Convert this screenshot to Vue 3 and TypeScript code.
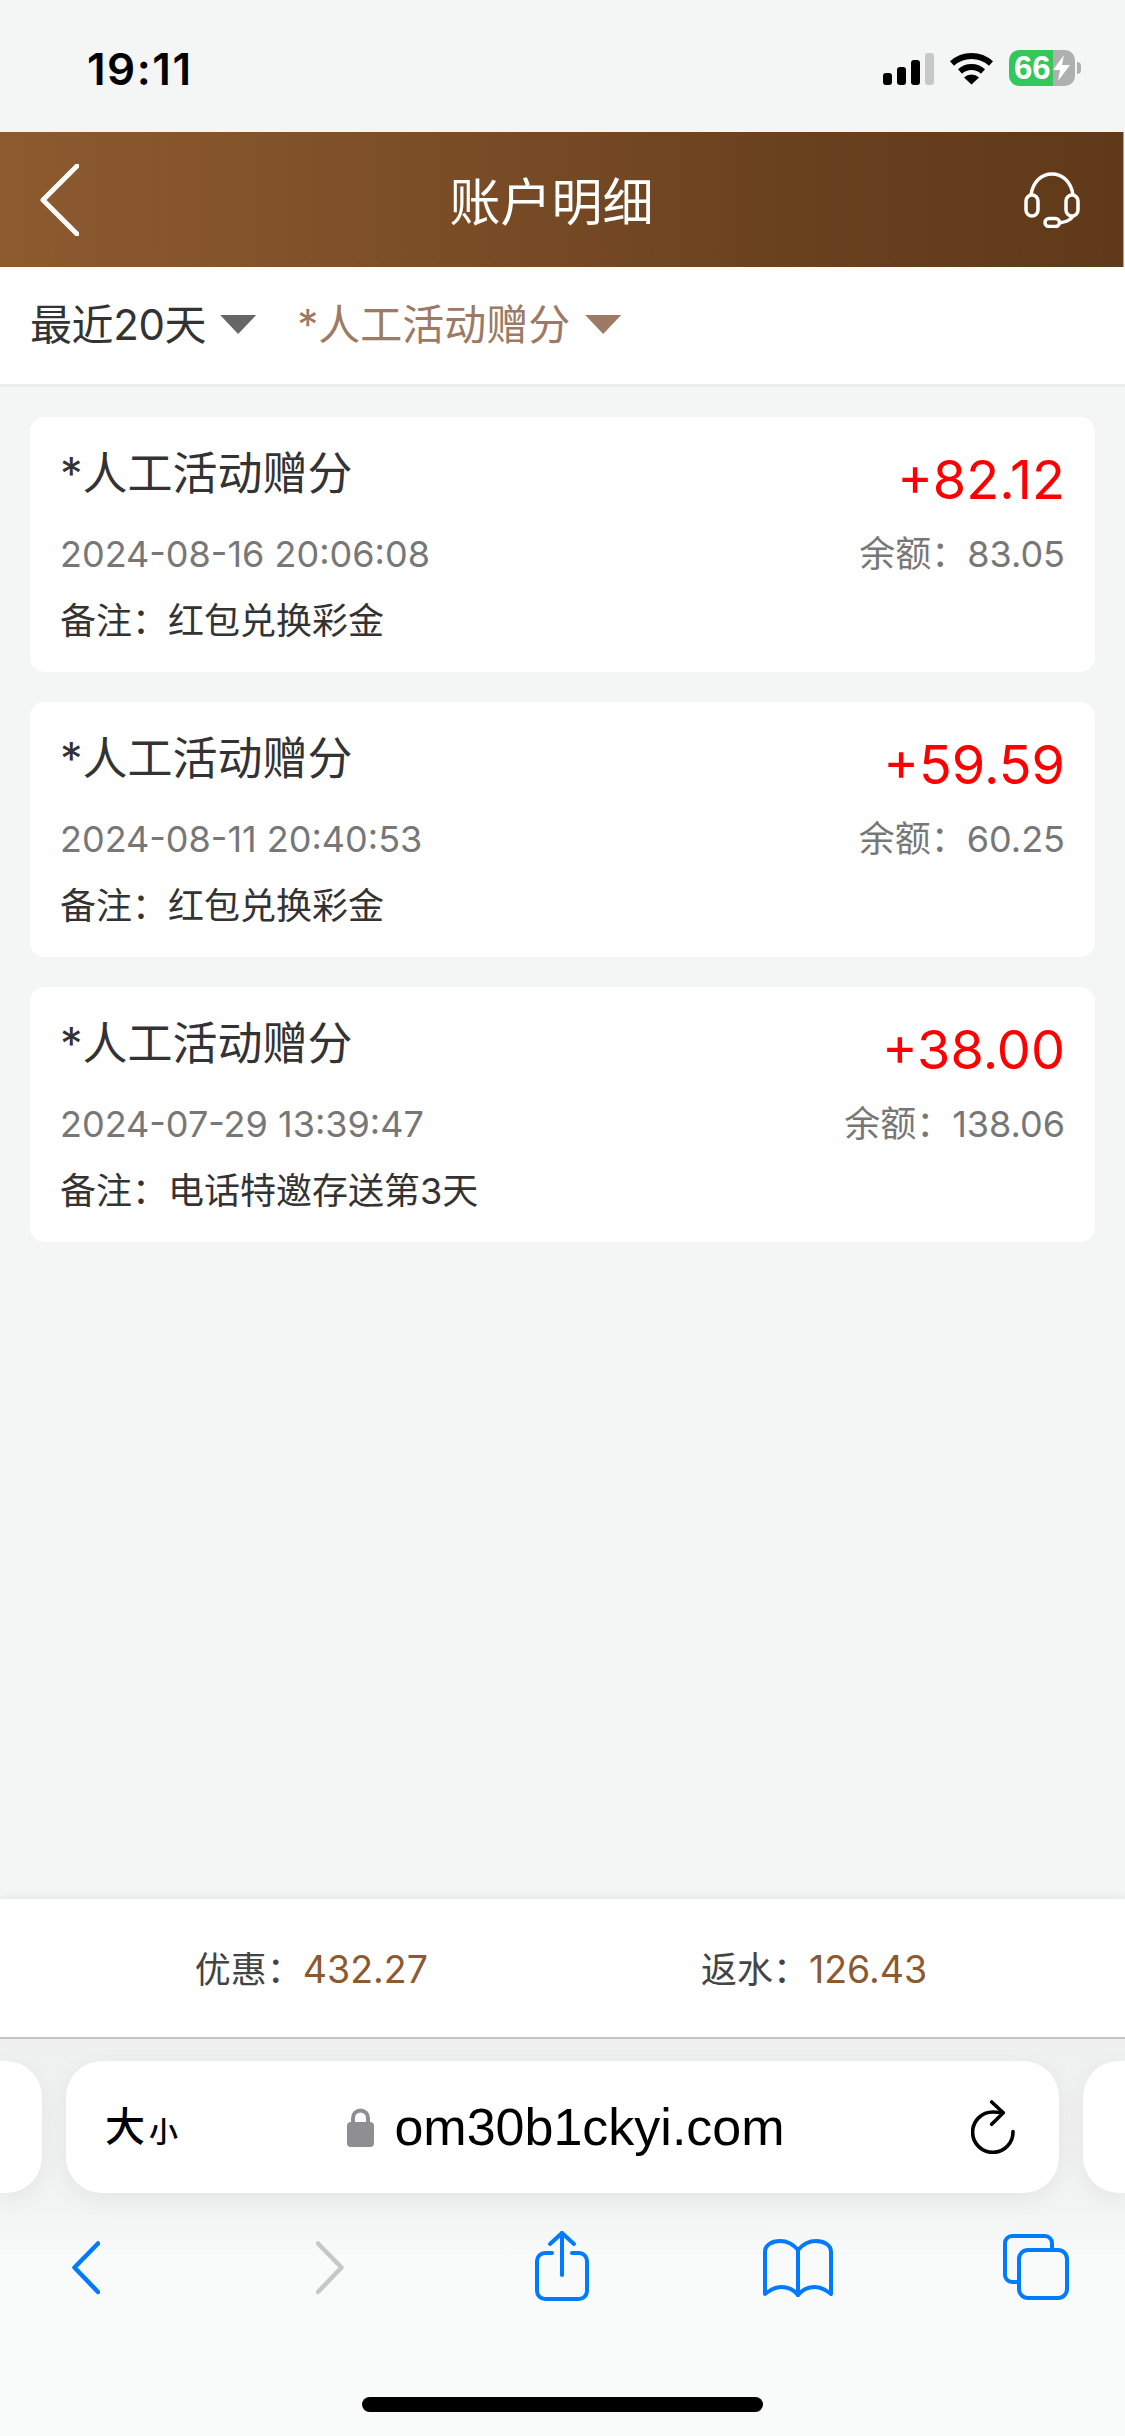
<script setup lang="ts">
interface Record {
  title: string
  amount: string
  time: string
  balance: string
  remark: string
}

const records: Record[] = [
  { title: '*人工活动赠分', amount: '+82.12', time: '2024-08-16 20:06:08', balance: '83.05', remark: '红包兑换彩金' },
  { title: '*人工活动赠分', amount: '+59.59', time: '2024-08-11 20:40:53', balance: '60.25', remark: '红包兑换彩金' },
  { title: '*人工活动赠分', amount: '+38.00', time: '2024-07-29 13:39:47', balance: '138.06', remark: '电话特邀存送第3天' },
]
</script>

<template>
  <div class="page">
    <div class="status-bar">
      <span class="clock">19:11</span>
      <div class="status-icons">
        <div class="signal">
          <i class="b1"></i><i class="b2"></i><i class="b3"></i><i class="b4"></i>
        </div>
        <svg class="wifi" width="45" height="34" viewBox="0 0 45 34">
          <path d="M3 12.5 A29 29 0 0 1 42 12.5" fill="none" stroke="#000" stroke-width="6" />
          <path d="M11 20.5 A17 17 0 0 1 34 20.5" fill="none" stroke="#000" stroke-width="6" />
          <path d="M22.5 33.5 L15 26.5 A11 11 0 0 1 30 26.5 Z" fill="#000" />
        </svg>
        <div class="battery">
          <span>66</span>
          <svg width="17" height="26" viewBox="0 0 17 26">
            <path d="M11 0 L0 15 H7 L5 26 L17 10 H9 Z" fill="#fff" />
          </svg>
        </div>
      </div>
    </div>

    <div class="header">
      <svg width="39" height="72" viewBox="0 0 39 72">
        <path d="M37 2 L3 36 L37 70" fill="none" stroke="#fff" stroke-width="5" stroke-linecap="round" stroke-linejoin="round" />
      </svg>
      <h1>账户明细</h1>
      <svg width="56" height="56" viewBox="0 0 56 56" fill="none" stroke="#fff" stroke-width="3.5">
        <path d="M7 23 C9 9 18 2 28 2 C38 2 47 9 49 23" />
        <rect x="2" y="23" width="12" height="21" rx="6" />
        <rect x="42" y="23" width="12" height="21" rx="6" />
        <path d="M49 44 C46 49 41 50 35 51" />
        <rect x="21" y="46.5" width="14.5" height="8" rx="4" />
      </svg>
    </div>

    <div class="filter-bar">
      <div class="filter first">
        <span>最近20天</span>
        <i class="arrow"></i>
      </div>
      <div class="filter active">
        <span>*人工活动赠分</span>
        <i class="arrow"></i>
      </div>
    </div>

    <div class="list">
      <div v-for="(item, index) in records" :key="index" class="card">
        <div class="row top">
          <span class="title">{{ item.title }}</span>
          <span class="amount">{{ item.amount }}</span>
        </div>
        <div class="row middle">
          <span>{{ item.time }}</span>
          <span>余额：{{ item.balance }}</span>
        </div>
        <div class="remark">备注：{{ item.remark }}</div>
      </div>
    </div>

    <div class="summary">
      <span>优惠：<em>432.27</em></span>
      <span>返水：<em>126.43</em></span>
    </div>

    <div class="toolbar">
      <div class="url-row">
        <div class="side-tab left"></div>
        <div class="url-bar">
          <div class="text-size"><span class="big">大</span><span class="small">小</span></div>
          <div class="domain">
            <svg width="27" height="39" viewBox="0 0 27 39">
              <path d="M6 17 V10 a7.5 7.5 0 0 1 15 0 V17" fill="none" stroke="#8e8e93" stroke-width="4" />
              <rect x="0" y="14" width="27" height="25" rx="4" fill="#8e8e93" />
            </svg>
            <span>om30b1ckyi.com</span>
          </div>
          <svg class="reload" width="44" height="54" viewBox="0 0 44 54" fill="none" stroke="#000" stroke-width="3.6" stroke-linecap="round" stroke-linejoin="round">
            <path d="M42 31.5 A20.2 20.2 0 1 1 22 12 L30 12.5" />
            <path d="M20.7 2 L32.3 12.7 L20.7 24.3" />
          </svg>
        </div>
        <div class="side-tab right"></div>
      </div>

      <div class="nav-row">
        <svg class="back" width="28" height="54" viewBox="0 0 28 54" fill="none" stroke="#007aff" stroke-width="4.5" stroke-linecap="round" stroke-linejoin="round">
          <path d="M26 2.5 L2.5 26.5 L26 51" />
        </svg>
        <svg class="forward" width="28" height="54" viewBox="0 0 28 54" fill="none" stroke="#c7c7c9" stroke-width="4.5" stroke-linecap="round" stroke-linejoin="round">
          <path d="M2 2.5 L25.5 26.5 L2 51" />
        </svg>
        <svg class="share" width="56" height="72" viewBox="0 0 56 72" fill="none" stroke="#007aff" stroke-width="4" stroke-linecap="round" stroke-linejoin="round">
          <path d="M18 23 H11 a8 8 0 0 0 -8 8 V61 a8 8 0 0 0 8 8 H45 a8 8 0 0 0 8 -8 V31 a8 8 0 0 0 -8 -8 H38" />
          <path d="M28 3 V45" />
          <path d="M16 14 L28 3 L40 14" />
        </svg>
        <svg class="book" width="70" height="58" viewBox="0 0 70 58" fill="none" stroke="#007aff" stroke-width="4" stroke-linecap="round" stroke-linejoin="round">
          <path d="M35 11 C30 5 23 2 17 2 C9 2 2 6 2 13 V55 C8 50 13 48 18 48 C25 48 31 51 35 56 C39 51 45 48 52 48 C57 48 62 50 68 55 V13 C68 6 61 2 53 2 C47 2 40 5 35 11 Z" />
          <path d="M35 11 V56" />
        </svg>
        <svg class="tabs" width="67" height="66" viewBox="0 0 67 66" fill="none" stroke="#007aff" stroke-width="4">
          <path d="M50 15 V9 a7 7 0 0 0 -7 -7 H10 a7 7 0 0 0 -7 7 V41 a7 7 0 0 0 7 7 H17" />
          <rect x="17" y="16" width="48" height="48" rx="9" />
        </svg>
      </div>

      <div class="home-indicator"></div>
    </div>
  </div>
</template>

<style scoped>
.page {
  width: 1125px;
  height: 2436px;
  display: flex;
  flex-direction: column;
  overflow: hidden;
  background-color: #f4f6f5;
  font-family: "Inter", "Noto Sans CJK SC", sans-serif;
}

.status-bar {
  height: 132px;
  padding: 0 50px 0 87px;
  display: flex;
  align-items: center;
  justify-content: space-between;
  box-sizing: border-box;
}

.clock {
  font-size: 44px;
  font-weight: 600;
  letter-spacing: 1.5px;
  color: #000;
  margin-top: 5px;
}

.status-icons {
  display: flex;
  align-items: center;
  margin-top: 4px;
}

.signal {
  display: flex;
  align-items: flex-end;
  gap: 5px;
  height: 33px;
}

.signal i {
  width: 9px;
  border-radius: 3px;
  background-color: #000;
}

.signal .b1 { height: 12px; }
.signal .b2 { height: 18px; }
.signal .b3 { height: 25px; }
.signal .b4 { height: 32px; background-color: #c7c9c9; }

.wifi {
  margin: 0 15px;
}

.battery {
  position: relative;
  width: 66px;
  height: 36px;
  border-radius: 10px;
  padding-left: 5px;
  box-sizing: border-box;
  display: flex;
  align-items: center;
  background: linear-gradient(90deg, #34c759 44px, #aeafb1 44px);
  color: #fff;
  font-family: "Liberation Sans", sans-serif;
  font-size: 33px;
  font-weight: 700;
}

.battery svg {
  margin-left: 2px;
}

.battery::after {
  content: "";
  position: absolute;
  left: 68px;
  top: 12px;
  width: 4px;
  height: 12px;
  border-radius: 0 6px 6px 0;
  background-color: #aeafb1;
}

.header {
  height: 135px;
  margin-right: 1px;
  padding: 0 43px 0 40px;
  display: flex;
  align-items: center;
  justify-content: space-between;
  box-sizing: border-box;
  border-right: 1px solid #b5a691;
  background: linear-gradient(90deg, #8d5a2f 0%, #7d4f28 35%, #6a411f 70%, #5f3919 100%);
}

.header h1 {
  margin: 0 0 2px;
  font-size: 51px;
  font-weight: 400;
  color: #fff;
}

.filter-bar {
  height: 120px;
  padding: 0 0 2px 30px;
  display: flex;
  align-items: center;
  gap: 41px;
  background-color: #fff;
  border-bottom: 3px solid #ebecec;
  box-sizing: border-box;
}

.filter {
  display: flex;
  align-items: center;
  gap: 14px;
  font-size: 42px;
  color: #333;
}

.filter span {
  margin-top: -6px;
}

.filter.first span {
  letter-spacing: -0.4px;
}

.filter.active {
  gap: 15px;
}

.filter .arrow {
  width: 36px;
  height: 19px;
  background-color: #666;
  clip-path: polygon(0 0, 100% 0, 50% 100%);
}

.filter.active {
  color: #9c7a63;
}

.filter.active .arrow {
  background-color: #9c7a63;
}

.list {
  flex: 1;
  padding: 30px 30px 0;
  display: flex;
  flex-direction: column;
  gap: 30px;
}

.card {
  height: 255px;
  padding: 30px 30px 0;
  box-sizing: border-box;
  border-radius: 15px;
  background-color: #fff;
}

.row {
  display: flex;
  justify-content: space-between;
}

.top {
  height: 62px;
}

.title {
  font-size: 45px;
  line-height: 53px;
  color: #333;
}

.amount {
  font-size: 54px;
  line-height: 65px;
  color: #ff0000;
}

.middle {
  margin-top: 25px;
  font-size: 36px;
  line-height: 40px;
  color: #777;
}

.remark {
  margin-top: 27px;
  font-size: 36px;
  line-height: 40px;
  color: #333;
}

.summary {
  height: 138px;
  padding: 0 3px 2px 0;
  box-sizing: border-box;
  display: flex;
  align-items: center;
  justify-content: center;
  gap: 273px;
  background-color: #fff;
  box-shadow: 0 -3px 8px rgba(0, 0, 0, 0.06);
  font-size: 36px;
  color: #444;
}

.summary em {
  font-style: normal;
  font-size: 37.5px;
  color: #8b5a2f;
}

.toolbar {
  height: 399px;
  box-sizing: border-box;
  border-top: 2px solid #c6c6c8;
  background: linear-gradient(180deg, #eff0f0 0, #f2f3f3 170px, #f9fafa 220px);
}

.url-row {
  margin-top: 22px;
  height: 132px;
  display: flex;
  gap: 24px;
}

.side-tab {
  width: 42px;
  background-color: #fff;
  box-shadow: 0 6px 24px rgba(0, 0, 0, 0.06);
}

.side-tab.left {
  border-radius: 0 36px 36px 0;
}

.side-tab.right {
  border-radius: 36px 0 0 36px;
}

.url-bar {
  flex: 1;
  padding: 0 44px 0 41px;
  display: grid;
  grid-template-columns: 1fr auto 1fr;
  align-items: center;
  border-radius: 36px;
  background-color: #fff;
  box-shadow: 0 6px 24px rgba(0, 0, 0, 0.06);
}

.text-size {
  display: flex;
  align-items: flex-end;
  color: #000;
  font-weight: 500;
  line-height: 1;
  margin-left: -2px;
}

.text-size .big {
  font-size: 40px;
}

.text-size .small {
  font-size: 29px;
  margin-left: 4px;
}

.domain {
  display: flex;
  align-items: center;
  gap: 20px;
  margin-left: 10px;
  font-family: "Liberation Sans", sans-serif;
  font-size: 52px;
  color: #000;
}

.reload {
  justify-self: end;
}

.nav-row {
  margin-top: 37px;
  height: 72px;
  padding-left: 72px;
  display: flex;
  align-items: center;
}

.back,
.forward {
  margin-top: 3px;
}

.forward { margin-left: 216px; }
.share { margin-left: 190px; }
.book { margin-left: 173px; margin-top: 4px; }
.tabs { margin-left: 169px; margin-top: 2px; }

.home-indicator {
  width: 401px;
  height: 15px;
  margin: 95px auto 0;
  border-radius: 8px;
  background-color: #000;
}
</style>
